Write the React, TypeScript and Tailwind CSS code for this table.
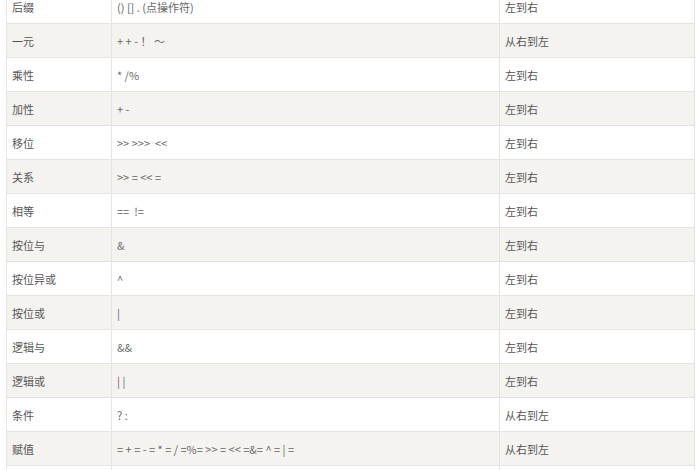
import React from 'react';

const rows: [string, string, string][] = [
  ['后缀', '() [] . (点操作符)', '左到右'],
  ['一元', '+ + - ！ ～', '从右到左'],
  ['乘性', '* /%', '左到右'],
  ['加性', '+ -', '左到右'],
  ['移位', '>> >>>  <<', '左到右'],
  ['关系', '>> = << =', '左到右'],
  ['相等', '==  !=', '左到右'],
  ['按位与', '&', '左到右'],
  ['按位异或', '^', '左到右'],
  ['按位或', '|', '左到右'],
  ['逻辑与', '&&', '左到右'],
  ['逻辑或', '| |', '左到右'],
  ['条件', '? :', '从右到左'],
  ['赋值', '= + = - = * = / =%= >> = << =&= ^ = | =', '从右到左'],
  ['', '', ''],
];

export default function App() {
  return (
    <div className="w-[700px] h-[470px] overflow-hidden bg-white" style={{ fontFamily: '"Noto Sans CJK SC", "Liberation Sans", sans-serif' }}>
      <div className="ml-[6px] mt-[-10px] w-[689px] border-l border-[#e4e4e4] text-[11px] leading-[14px] text-[#555]">
        {rows.map((r, i) => (
          <div key={i} className={`flex h-[34px] border-b border-[#e4e4e4] ${i % 2 ? 'bg-[#f4f3f0]' : 'bg-white'}`}>
            <div className="w-[105px] border-r border-[#e4e4e4] pl-[5px] flex items-center">{r[0]}</div>
            <div className="w-[388px] border-r border-[#e4e4e4] pl-[5px] flex items-center text-[#666] whitespace-pre">{r[1]}</div>
            <div className="w-[195px] border-r border-[#e4e4e4] pl-[5px] flex items-center">{r[2]}</div>
          </div>
        ))}
      </div>
    </div>
  );
}
